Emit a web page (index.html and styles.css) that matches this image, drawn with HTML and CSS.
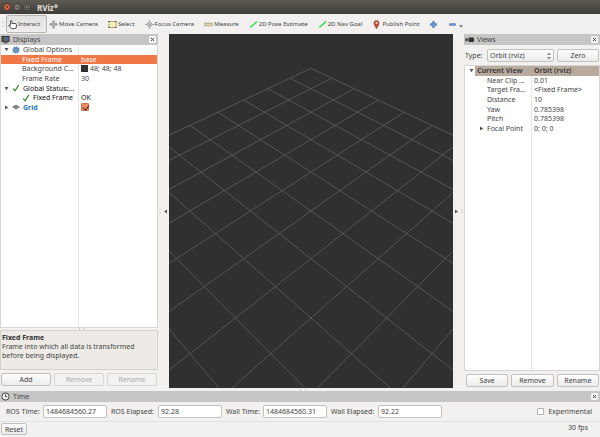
FILE: index.html
```html
<!DOCTYPE html>
<html lang="en">
<head>
<meta charset="utf-8">
<title>RViz*</title>
<link rel="stylesheet" href="styles.css">
</head>
<body>
<div class="window">
  <header class="titlebar">
    <button class="win-btn win-close" aria-label="Close"><svg viewBox="0 0 8 8"><path d="M2 2l4 4M6 2l-4 4"/></svg></button>
    <button class="win-btn" aria-label="Minimize"><svg viewBox="0 0 8 8"><path d="M1.500 4h5"/></svg></button>
    <button class="win-btn" aria-label="Maximize"><svg viewBox="0 0 8 8"><path d="M2 2h4v4H2z"/></svg></button>
    <h1 class="title">RViz*</h1>
  </header>

  <nav class="toolbar" aria-label="Tools">
    <span class="grip"></span>
    <button class="tool tool-active"><svg class="tool-icon" viewBox="0 0 9 9"><path d="M2.500 5.500V1.300q0-.8.7-.8t.7.8V3.500h3.300q1.200 0 1.200 1.200V7q0 1.500-1.500 1.500H3.500L.8 6q-.3-1 .6-.9l1.100.9" fill="#fff" stroke="#444" stroke-width=".9"/></svg>Interact</button>
    <button class="tool"><svg class="tool-icon" viewBox="0 0 9 9"><path d="M4.500 0l1.700 2H5.300v1.200h1.500V2.400L9 4.300 6.800 6.200v-.8H5.300V7h.9L4.500 9 2.800 7h.9V5.400H2.200v.8L0 4.300l2.200-1.900v.8h1.500V2h-.9z" fill="#999"/><circle cx="4.500" cy="4.300" r="1.500" fill="#bbb" stroke="#888" stroke-width=".5"/></svg>Move Camera</button>
    <button class="tool"><svg class="tool-icon" viewBox="0 0 9 9"><path d="M1 1.500h7v6H1z" fill="#f7f0b4" stroke="#77734a" stroke-width=".8" stroke-dasharray="1.500 .7"/><path d="M.5 1h1.200v1H.5zM7.300 1h1.200v1H7.300zM.5 7h1.200v1H.5zM7.300 7h1.200v1H7.300z" fill="#333"/></svg>Select</button>
    <button class="tool"><svg class="tool-icon" viewBox="0 0 9 9"><path d="M4.500 0v9M0 4.500h9" stroke="#a5a5a5" stroke-width="1.100"/><path d="M4.500 1.500l3 3-3 3-3-3z" fill="#ccc" stroke="#999" stroke-width=".9"/><circle cx="4.500" cy="4.500" r=".9" fill="#888"/></svg>Focus Camera</button>
    <button class="tool"><svg class="tool-icon" viewBox="0 0 9 9"><path d="M.8 3.200h7.400v2.600H.8z" fill="#efe7b0" stroke="#99937a" stroke-width=".8"/><path d="M2.500 3.500v1M4.500 3.500v1M6.500 3.500v1" stroke="#99937a" stroke-width=".5"/></svg>Measure</button>
    <button class="tool"><svg class="tool-icon" viewBox="0 0 9 9"><path d="M8 1.500L3 6" stroke="#1fe03f" stroke-width="1.300"/><path d="M.8 7.800l1.300-2.600 1.600 1.700z" fill="#1fe03f"/></svg>2D Pose Estimate</button>
    <button class="tool"><svg class="tool-icon" viewBox="0 0 9 9"><path d="M8 1.500L3 6" stroke="#1fe03f" stroke-width="1.300"/><path d="M.8 7.800l1.300-2.600 1.600 1.700z" fill="#1fe03f"/></svg>2D Nav Goal</button>
    <button class="tool"><svg class="tool-icon" viewBox="0 0 9 9"><path d="M4.500 8.800L2.500 5.200Q1.200 2.900 2.400 1.500 3.300.5 4.500.5t2.100 1Q7.800 2.900 6.500 5.200z" fill="#c04a2c" stroke="#7c3324" stroke-width=".5"/><circle cx="4.500" cy="2.900" r="1.100" fill="#f6dcd2"/></svg>Publish Point</button>
    <button class="tool" aria-label="Add tool"><svg class="tool-icon" viewBox="0 0 9 9"><path d="M3.600 1.500h1.800v2.100h2.100v1.800H5.400v2.100H3.600V5.400H1.500V3.600h2.100z" fill="#6d9bd2" stroke="#3b6aa8" stroke-width=".6"/></svg></button>
    <button class="tool tool-menu" aria-label="Remove tool"><svg class="tool-icon" viewBox="0 0 9 9"><path d="M1.500 3.700h6v1.600h-6z" fill="#6d9bd2" stroke="#3b6aa8" stroke-width=".6"/></svg><svg class="menu-arrow" viewBox="0 0 4 4"><path d="M0 1h4L2 4z" fill="#888"/></svg></button>
  </nav>

  <main class="workspace">
    <section class="dock">
      <header class="dock-head"><svg class="head-icon" viewBox="0 0 9 9"><path d="M.5 1h8v5.800h-8z" fill="#222"/><path d="M1.300 1.800h1.400V6H1.300z" fill="#8a3f35"/><path d="M2.700 1.800h1.400V6H2.700z" fill="#398455"/><path d="M4.100 1.800h1.800V6H4.100z" fill="#467fa3"/><path d="M5.900 1.800h1.800V6H5.900z" fill="#87508a"/><path d="M2.500 7.300h4v1h-4z" fill="#444"/></svg><h2>Displays</h2><button class="dock-close" aria-label="Close Displays"><svg viewBox="0 0 7 7"><path d="M2 2l3 3M5 2L2 5"/></svg></button></header>
      <div class="tree tree-displays">
        <table>
          <tbody>
            <tr><td class="lv0"><svg class="twist" viewBox="0 0 5 5"><path d="M.5 1h4l-2 3.300z"/></svg><svg class="node-icon" viewBox="0 0 8 8"><circle cx="4" cy="4" r="2.900" fill="#9dbbe0" stroke="#4878b4" stroke-width="1.300" stroke-dasharray="1.500 .7"/><circle cx="4" cy="4" r="1.900" fill="none" stroke="#4878b4" stroke-width=".7"/><path d="M4 2v4M2 4h4" stroke="#4878b4" stroke-width=".6"/></svg><span>Global Options</span></td><td></td></tr>
            <tr class="selected"><td class="lv1"><span>Fixed Frame</span></td><td>base</td></tr>
            <tr><td class="lv1"><span>Background C...</span></td><td><i class="swatch"></i>48; 48; 48</td></tr>
            <tr><td class="lv1"><span>Frame Rate</span></td><td>30</td></tr>
            <tr class="status"><td class="lv0"><svg class="twist" viewBox="0 0 5 5"><path d="M.5 1h4l-2 3.300z"/></svg><svg class="node-icon" viewBox="0 0 8 8"><path class="tick" d="M1.200 4.500l1.800 2.300L6.800 1"/></svg><span>Global Status:...</span></td><td></td></tr>
            <tr class="status"><td class="lv1"><svg class="node-icon" viewBox="0 0 8 8"><path class="tick" d="M1.200 4.500l1.800 2.300L6.800 1"/></svg><span>Fixed Frame</span></td><td>OK</td></tr>
            <tr><td class="lv0 display-name"><svg class="twist" viewBox="0 0 5 5"><path d="M1 .5v4L4.300 2.500z"/></svg><svg class="node-icon" viewBox="0 0 8 8"><path d="M.7 4L4 2.200 7.300 4 4 5.800zM2.300 3.100l3.400 1.800M5.700 3.100L2.300 4.900" fill="none" stroke="#555" stroke-width=".8"/></svg><span>Grid</span></td><td><input type="checkbox" class="check-orange" checked aria-label="Grid enabled"></td></tr>
          </tbody>
        </table>
      </div>
      <div class="help"><strong>Fixed Frame</strong><p>Frame into which all data is transformed before being displayed.</p></div>
      <div class="actions"><button class="btn">Add</button><button class="btn" disabled>Remove</button><button class="btn" disabled>Rename</button></div>
    </section>

    <button class="collapse" aria-label="Hide left panel"><i class="dots"></i><svg class="twist" viewBox="0 0 5 5"><path d="M4 .5v4L1 2.500z"/></svg></button>

    <section class="view" aria-label="3D view">
      <svg viewBox="-142 -177 284 354" preserveAspectRatio="xMidYMid slice">
        <g id="lines">
          <path d="M-302.600 0L0 428M-259.400-20.400L55 350.200M-220.100-38.900L100.900 285.300M-184.200-55.800L139.700 230.500M-151.300-71.300L172.900 183.400M-121-85.600L201.700 142.700M-93.100-98.800L227 107M-67.200-111L249.200 75.500M-43.200-122.300L269 47.600M-20.900-132.800L286.700 22.500M0-142.700L302.600 0"/>
        </g>
        <use href="#lines" transform="scale(-1 1)"/>
      </svg>
    </section>

    <button class="collapse" aria-label="Hide right panel"><svg class="twist" viewBox="0 0 5 5"><path d="M1 .5v4L4 2.500z"/></svg><i class="dots"></i></button>

    <section class="dock dock-views">
      <header class="dock-head"><svg class="head-icon" viewBox="0 0 9 9"><path d="M3.500 2.500h4.500q1 0 1 1v2.500q0 1-1 1H3.500zM.5 2.800L3 4.200v1L.5 6.800z" fill="#333"/></svg><h2>Views</h2><button class="dock-close" aria-label="Close Views"><svg viewBox="0 0 7 7"><path d="M2 2l3 3M5 2L2 5"/></svg></button></header>
      <div class="type-row"><label for="type">Type:</label><span class="combo"><select id="type"><option>Orbit (rviz)</option></select><svg viewBox="0 0 4 8"><path d="M0 3l2-2.500L4 3zM0 5l2 2.500L4 5z"/></svg></span><button class="btn">Zero</button></div>
      <div class="tree tree-views">
        <table>
          <tbody>
            <tr class="current"><td class="lv0"><svg class="twist" viewBox="0 0 5 5"><path d="M.5 1h4l-2 3.300z"/></svg><span>Current View</span></td><td>Orbit (rviz)</td></tr>
            <tr><td class="lv1"><span>Near Clip ...</span></td><td>0.01</td></tr>
            <tr><td class="lv1"><span>Target Fra...</span></td><td>&lt;Fixed Frame&gt;</td></tr>
            <tr><td class="lv1"><span>Distance</span></td><td>10</td></tr>
            <tr><td class="lv1"><span>Yaw</span></td><td>0.785398</td></tr>
            <tr><td class="lv1"><span>Pitch</span></td><td>0.785398</td></tr>
            <tr><td class="lv1 has-twist"><svg class="twist" viewBox="0 0 5 5"><path d="M1 .5v4L4.300 2.500z"/></svg><span>Focal Point</span></td><td>0; 0; 0</td></tr>
          </tbody>
        </table>
      </div>
      <div class="actions"><button class="btn">Save</button><button class="btn">Remove</button><button class="btn">Rename</button></div>
    </section>
  </main>

  <section class="time">
    <header class="dock-head"><svg class="head-icon" viewBox="0 0 9 9"><circle cx="4.500" cy="4.500" r="3.600" fill="#f4f4f4" stroke="#333" stroke-width=".9"/><path d="M4.500 2v2.700h2" fill="none" stroke="#333" stroke-width=".8"/></svg><h2>Time</h2><button class="dock-close" aria-label="Close Time"><svg viewBox="0 0 7 7"><path d="M2 2l3 3M5 2L2 5"/></svg></button></header>
    <div class="time-row">
      <label for="rt">ROS Time:</label><input id="rt" type="text" value="1484684560.27">
      <label for="re">ROS Elapsed:</label><input id="re" type="text" value="92.28">
      <label for="wt">Wall Time:</label><input id="wt" type="text" value="1484684560.31">
      <label for="we">Wall Elapsed:</label><input id="we" type="text" value="92.22">
      <label class="experimental"><input type="checkbox" class="check">Experimental</label>
    </div>
  </section>
  <footer class="statusbar"><button class="btn reset">Reset</button><span>30 fps</span></footer>
</div>
</body>
</html>
```
FILE: styles.css
```css
* { box-sizing: border-box; }
body {
  margin: 0;
  font: 7px/9px "Noto Sans", "Open Sans", sans-serif;
  color: #444;
  background: #f2f1f0;
}
button, input, select { font: inherit; color: inherit; margin: 0; padding: 0; border: 0; background: none; }
h1, h2, p { margin: 0; font: inherit; }
svg { display: block; flex: none; }
.window { min-height: 100vh; display: flex; flex-direction: column; }

/* Title bar */
.titlebar {
  height: 14px;
  display: flex;
  align-items: center;
  gap: 2px;
  padding: 0 3px;
  background: linear-gradient(#5d5b53, #3e3d39);
}
.win-btn { width: 8px; height: 8px; border-radius: 50%; background: #7b7a74; border: 1px solid #3b3a36; }
.win-btn svg { width: 6px; height: 6px; stroke: #3b3a36; stroke-width: 1; fill: none; }
.win-close { background: #ec6337; }
.title { margin-left: 4px; font-weight: bold; font-size: 8px; color: #e3dfd6; }

/* Toolbar */
.toolbar { height: 20px; display: flex; align-items: center; padding-left: 2px; }
.grip { width: 2px; height: 5px; margin-right: 2px; border-top: 1px solid #ccc; border-bottom: 1px solid #ccc; }
.tool { display: flex; align-items: center; gap: 1px; height: 18px; padding: 0 5px; font-size: 6px; white-space: nowrap; }
.tool-active { padding: 0 6px 0 1px; border: 1px solid #b9b6b2; border-radius: 2px; background: linear-gradient(#e2e1df, #eeedec); margin-right: -3px; }
.tool-icon { width: 9px; height: 9px; }
.tool-menu { gap: 2px; }
.menu-arrow { width: 4px; height: 4px; margin-top: 3px; }

/* Docks */
.workspace { position: relative; flex: 1; display: grid; grid-template-columns: 158px 11px 1fr 11px 136px; padding-bottom: 3px; }
.workspace::after { content: ""; position: absolute; left: 50%; bottom: 0; width: 4px; height: 2px; border-left: 1px solid #d0cecb; border-right: 1px solid #d0cecb; }
.dock { display: flex; flex-direction: column; min-width: 0; }
.dock-head { display: flex; align-items: center; gap: 3px; height: 11px; padding: 0 2px 0 1px; background: #c6c6c6; }
.dock-head h2 { flex: 1; }
.head-icon { width: 9px; height: 9px; }
.dock-close { width: 7px; height: 7px; border-radius: 1px; background: #f4f4f4; }
.dock-close svg { width: 7px; height: 7px; stroke: #444; stroke-width: 1; }

/* Property trees */
.tree { flex: 1; border: 1px solid #d8d6d3; border-top: 0; }
.tree-displays { background: linear-gradient(90deg, transparent 77px, #e6e6e6 77px, #e6e6e6 78px, transparent 78px) #fff; }
.tree-views { background: linear-gradient(90deg, transparent 66px, #e6e6e6 66px, #e6e6e6 67px, transparent 67px) #fff; border-top: 1px solid #d8d6d3; }
.tree table { display: block; }
.tree tbody { display: grid; grid-auto-rows: 1fr; height: 67px; }
.tree tr { display: grid; min-height: 0; }
.tree-displays tr { grid-template-columns: 78px 1fr; }
.tree-views tr { grid-template-columns: 67px 1fr; }
.tree td { display: flex; align-items: center; min-width: 0; padding: 0 0 0 2px; white-space: nowrap; }
.twist { width: 5px; height: 5px; fill: #555; }
.node-icon { width: 8px; height: 8px; }
.tick { fill: none; stroke: #258526; stroke-width: 1.2; }
.tree-displays .lv0 { padding-left: 3px; gap: 3px; }
.tree-displays .lv1 { padding-left: 21px; gap: 3px; }
.tree-views .lv0 { padding-left: 4px; gap: 3px; }
.tree-views .lv1 { padding-left: 22px; gap: 3px; }
.tree-views .has-twist { padding-left: 14px; }
.selected { color: #fff; background: #f07746; }
.status { color: #111; }
.display-name { color: #2a76c6; font-weight: bold; }
.current { font-weight: bold; background: linear-gradient(90deg, transparent 10px, #b9aa9e 10px); }
.swatch { width: 7px; height: 7px; margin-right: 2px; background: #303030; }
.check-orange { appearance: none; position: relative; width: 8px; height: 8px; border: 1px solid #c9714f; border-radius: 1px; background: #f08a62; }
.check-orange:checked::after { content: ""; position: absolute; left: 2px; top: 0; width: 3px; height: 5px; border: solid #5a2a1a; border-width: 0 1px 1px 0; transform: rotate(40deg); }

.help { position: relative; height: 40px; margin-top: 2px; padding: 2px 1px; border: 1px solid #d5d1cb; background: #eeebe6; }
.help::before { content: ""; position: absolute; left: 50%; top: -3px; width: 3px; height: 2px; border-left: 1px solid #d0cecb; border-right: 1px solid #d0cecb; }
.help strong, .help p { display: block; }
.help strong { color: #333; }
.actions { display: grid; grid-template-columns: 1fr 1fr 1fr; gap: 3px; padding: 3px 1px 2px; }
.btn {
  height: 13px;
  border: 1px solid #c4c1bd;
  border-radius: 2px;
  background: linear-gradient(#fdfdfd, #ececeb);
}
.btn:disabled { color: #aaa; border-color: #d8d6d3; background: #f3f2f1; }
.dock-views .actions { padding: 3px 1px 1px 2px; }

.type-row { display: grid; grid-template-columns: 19px 1fr 42px; gap: 3px; align-items: center; height: 20px; padding: 0 1px; }
.combo { position: relative; display: block; height: 13px; }
.combo select { appearance: none; display: block; width: 100%; height: 13px; padding-left: 2px; border: 1px solid #c4c1bd; border-radius: 2px; background: linear-gradient(#fdfdfd, #ececeb); }
.combo svg { position: absolute; right: 3px; top: 3px; width: 4px; height: 8px; fill: #888; }

/* Collapse handles and 3D view */
.collapse { display: flex; align-items: center; justify-content: center; gap: 2px; }
.dots { width: 2px; height: 4px; border-top: 1px solid #d0cecb; border-bottom: 1px solid #d0cecb; }
.view { position: relative; overflow: hidden; background: #303030; }
.view svg { position: absolute; inset: 0; width: 100%; height: 100%; stroke: #646464; stroke-width: 0.7; fill: none; }

/* Time panel */
.time-row { display: grid; grid-template-columns: 33px 64px 43px 64px 33px 64px 43px 64px 1fr; gap: 4px; align-items: center; height: 20px; padding: 0 8px 0 6px; white-space: nowrap; border-bottom: 1px solid #e3e2e0; }
.time-row input[type="text"] { width: 100%; height: 13px; padding: 0 2px; border: 1px solid #c4c1bd; border-radius: 2px; background: #fff; }
.experimental { display: flex; align-items: center; justify-content: flex-end; gap: 4px; }
.check { appearance: none; width: 7px; height: 7px; border: 1px solid #b5b2ae; border-radius: 1px; background: #fff; }
.statusbar { display: flex; align-items: flex-start; justify-content: space-between; height: 15px; padding: 1px 12px 0 1px; }
.reset { width: 26px; height: 12px; }
```
